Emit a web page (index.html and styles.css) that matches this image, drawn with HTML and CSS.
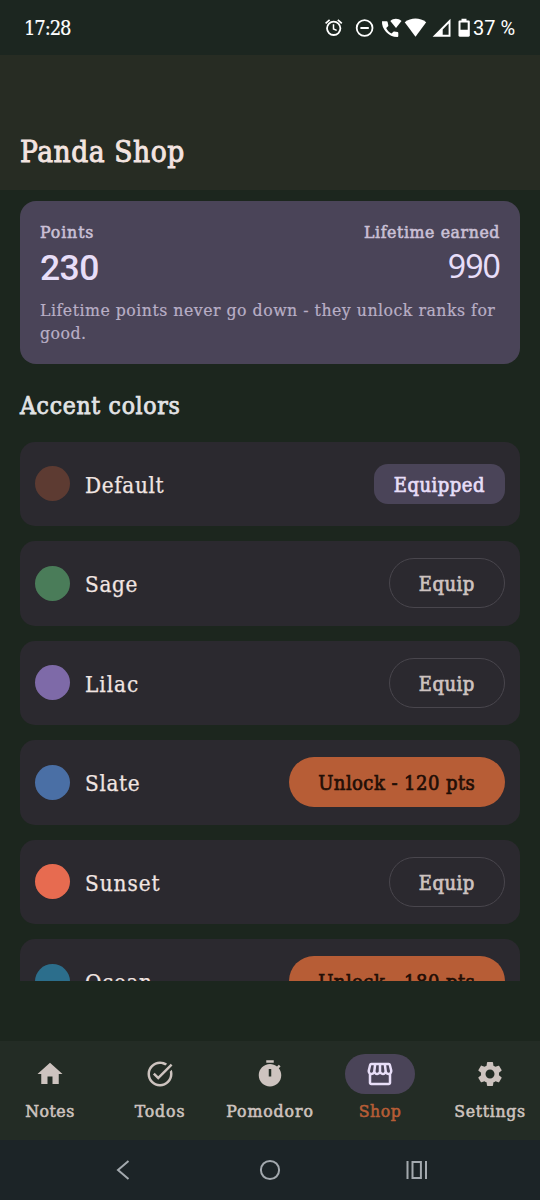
FILE: index.html
```
<!DOCTYPE html>
<html lang="en">
<head>
<meta charset="utf-8">
<title>Panda Shop</title>
<link rel="stylesheet" href="styles.css">
</head>
<body>
<div class="screen">
  <div class="status">
    <span class="clock">17:28</span>
    <div class="status-right">
      <svg width="150" height="24" viewBox="0 0 150 24" fill="none">
        <g stroke="#fff" stroke-width="1.8">
          <circle cx="10.700" cy="12.300" r="6.700"/>
          <path d="M10.500 8.300v4.700l3.200 1.400" stroke-width="1.500"/>
          <path d="M2.600 7.400l4-3.500M18.800 7.400l-4-3.500" stroke-width="1.700"/>
          <circle cx="41.600" cy="12" r="7.900"/>
          <path d="M37.400 12h8.400" stroke-width="2"/>
        </g>
        <g fill="#fff">
          <path d="M59 5.200c-.6 7.600 6.400 15.800 15.400 15.800.6 0 .9-.4.9-1v-3.100c0-.5-.3-.8-.8-.9l-3.200-.6c-.4 0-.7.100-.9.300l-1.900 1.900c-2.500-1.300-4.200-3.100-5.300-5.500l1.900-1.900c.2-.3.300-.5.200-.9l-.7-3.300c-.1-.5-.4-.8-.9-.8z"/>
          <path d="M67.300 5c3-2.900 8.200-2.900 11.200 0L73 12z"/>
          <path d="M81.700 6.300c6.200-5 15.300-5 21.500 0L92.500 20.700z"/>
          <path fill-rule="evenodd" d="M127.500 2.800v17.900h-17.900zM125.600 7.600l-5.900 5.900v5.300h5.900z"/>
          <path fill-rule="evenodd" d="M138.500 2.800h5v1.700h2c.8 0 1.300.5 1.300 1.200V19.600c0 .7-.5 1.200-1.300 1.200h-8.700c-.8 0-1.300-.5-1.300-1.200V5.700c0-.7.5-1.200 1.300-1.200h1.700zM137.500 6.600v7.200h7.200V6.600z"/>
        </g>
      </svg>
      <span class="battery-text">37 %</span>
    </div>
  </div>

  <header class="topbar"><h1 class="title">Panda Shop</h1></header>

  <main class="content">
    <section class="points-card">
      <div class="points-row">
        <div>
          <div class="label label-points">Points</div>
          <div class="points-value">230</div>
        </div>
        <div class="lifetime">
          <div class="label">Lifetime earned</div>
          <div class="lifetime-value">990</div>
        </div>
      </div>
      <p class="hint">Lifetime points never go down - they unlock ranks for good.</p>
    </section>

    <h2 class="section-title">Accent colors</h2>

    <div class="list">
      <div class="item"><span class="dot brown"></span><span class="name">Default</span><span class="badge">Equipped</span></div>
      <div class="item"><span class="dot sage"></span><span class="name">Sage</span><button class="btn outline">Equip</button></div>
      <div class="item"><span class="dot lilac"></span><span class="name wide">Lilac</span><button class="btn outline">Equip</button></div>
      <div class="item"><span class="dot slate"></span><span class="name">Slate</span><button class="btn filled">Unlock - 120 pts</button></div>
      <div class="item"><span class="dot sunset"></span><span class="name wide">Sunset</span><button class="btn outline">Equip</button></div>
      <div class="item"><span class="dot ocean"></span><span class="name">Ocean</span><button class="btn filled">Unlock - 180 pts</button></div>
    </div>
  </main>

  <nav class="tabs">
    <a class="tab"><span class="pill"><svg class="icon" viewBox="0 0 24 24"><path d="M10 20v-6h4v6h5v-8h3L12 3 2 12h3v8z"/></svg></span><span class="tab-label">Notes</span></a>
    <a class="tab"><span class="pill"><svg class="icon" viewBox="0 0 24 24"><path d="M22 5.180L10.590 16.600l-4.240-4.240 1.410-1.410 2.830 2.830 10-10L22 5.180zm-2.210 5.040c.13.57.21 1.170.21 1.780 0 4.420-3.580 8-8 8s-8-3.580-8-8 3.580-8 8-8c1.580 0 3.040.46 4.280 1.250l1.440-1.440C16.100 2.670 14.130 2 12 2 6.480 2 2 6.480 2 12s4.480 10 10 10 10-4.480 10-10c0-1.190-.22-2.330-.6-3.390l-1.610 1.610z"/></svg></span><span class="tab-label spread">Todos</span></a>
    <a class="tab"><span class="pill"><svg class="icon" viewBox="0 0 24 24"><path d="M9 1h6v2H9z"/><path d="M19.030 7.390l1.420-1.420c-.43-.51-.9-.99-1.410-1.410l-1.420 1.420C16.070 4.740 14.120 4 12 4c-4.970 0-9 4.030-9 9s4.020 9 9 9 9-4.030 9-9c0-2.120-.74-4.070-1.970-5.610zM13 14h-2V8h2v6z"/></svg></span><span class="tab-label spread">Pomodoro</span></a>
    <a class="tab active"><span class="pill"><svg class="icon" viewBox="0 0 24 24"><path d="M21.900 8.890l-1.050-4.370c-.22-.9-1-1.520-1.910-1.520H5.050c-.9 0-1.690.63-1.900 1.520L2.100 8.890c-.24 1.020-.02 2.060.62 2.880.08.11.19.19.28.29V19c0 1.100.9 2 2 2h14c1.100 0 2-.9 2-2v-6.940c.09-.09.2-.18.28-.28.64-.82.87-1.870.62-2.890zm-2.990-3.900l1.050 4.370c.1.42.01.84-.25 1.170-.14.18-.44.47-.94.47-.61 0-1.140-.49-1.210-1.140L16.980 5l1.930-.01zM13 5h1.960l.54 4.520c.05.39-.07.78-.33 1.070-.22.26-.54.41-.95.41-.67 0-1.220-.59-1.220-1.310V5zM8.490 9.520L9.040 5H11v4.690c0 .72-.55 1.310-1.290 1.310-.34 0-.65-.15-.89-.41-.25-.29-.37-.68-.33-1.070zm-4.450-.16L5.050 5h1.970l-.58 4.860c-.08.65-.6 1.140-1.210 1.140-.49 0-.8-.29-.93-.47-.27-.32-.36-.75-.26-1.170zM5 19v-6.030c.08.01.15.03.23.03.87 0 1.660-.36 2.240-.95.6.6 1.400.95 2.310.95.87 0 1.650-.36 2.230-.93.59.57 1.390.93 2.290.93.84 0 1.640-.35 2.240-.95.58.59 1.370.95 2.240.95.08 0 .15-.02.23-.03V19H5z"/></svg></span><span class="tab-label">Shop</span></a>
    <a class="tab"><span class="pill"><svg class="icon" viewBox="0 0 24 24"><path d="M19.140 12.940c.04-.3.06-.61.06-.94 0-.32-.02-.64-.07-.94l2.030-1.580c.18-.14.23-.41.12-.61l-1.920-3.320c-.12-.22-.37-.29-.59-.22l-2.390.96c-.5-.38-1.030-.7-1.620-.94l-.36-2.540c-.04-.24-.24-.41-.48-.41h-3.840c-.24 0-.43.17-.47.41l-.36 2.540c-.59.24-1.130.57-1.620.94l-2.390-.96c-.22-.08-.47 0-.59.22L2.740 8.870c-.12.21-.08.47.12.61l2.030 1.580c-.05.3-.09.63-.09.94s.02.64.07.94l-2.030 1.580c-.18.14-.23.41-.12.61l1.920 3.320c.12.22.37.29.59.22l2.390-.96c.5.38 1.030.7 1.620.94l.36 2.540c.05.24.24.41.48.41h3.840c.24 0 .44-.17.47-.41l.36-2.540c.59-.24 1.130-.56 1.620-.94l2.390.96c.22.08.47 0 .59-.22l1.920-3.320c.12-.22.07-.47-.12-.61l-2.010-1.580zM12 15.600c-1.980 0-3.600-1.620-3.600-3.600s1.620-3.600 3.600-3.600 3.600 1.620 3.600 3.600-1.620 3.600-3.600 3.600z"/></svg></span><span class="tab-label spread-sm">Settings</span></a>
  </nav>

  <div class="sysnav">
    <svg class="sys" viewBox="0 0 24 24"><path d="M17.500 3L7 12l10.500 9"/></svg>
    <svg class="sys" viewBox="0 0 24 24"><circle cx="12" cy="12" r="9.100"/></svg>
    <svg class="sys" viewBox="0 0 24 24"><path d="M2.500 3v18M21 3v18M7.500 4h8.400v16H7.500z"/></svg>
  </div>
</div>
</body>
</html>
```
FILE: styles.css
```
* { box-sizing: border-box; }
body {
  margin: 0;
  background: #1c261e;
  font-family: "Roboto Slab", "DejaVu Serif Condensed", "DejaVu Serif", serif;
}
.screen { width: 540px; height: 1200px; display: flex; flex-direction: column; overflow: hidden; }

.status {
  height: 55px; flex: none; padding: 0 24px;
  display: flex; align-items: center; justify-content: space-between;
  background: #1c2620; color: #fff;
}
.clock { font-size: 20px; letter-spacing: -1.1px; -webkit-text-stroke: .2px; }
.status-right { display: flex; align-items: center; }
.battery-text { font: 20px/24px Roboto, sans-serif; width: 43px; white-space: nowrap; }

.topbar { height: 135px; flex: none; display: flex; align-items: flex-end; padding: 0 20px 18px; background: #272c23; }
.title { margin: 0; font-size: 29.5px; line-height: 40px; font-weight: 400; letter-spacing: .6px; color: #f3e4e0; -webkit-text-stroke: .9px; }

.content { height: 791px; flex: none; padding: 10.5px 20px 0; overflow: hidden; }
.points-card { height: 163px; padding: 19.5px 20px 0; border-radius: 16px; background: #4a4458; color: #e8def8; }
.points-row { display: flex; justify-content: space-between; }
.label { font-size: 17.500px; line-height: 25px; letter-spacing: .6px; color: #cac0d6; -webkit-text-stroke: .55px; }
.label-points { letter-spacing: .9px; }
.points-value { padding-top: 2px; font: 500 35.500px/42px Roboto, sans-serif; letter-spacing: -.6px; }
.lifetime { text-align: right; }
.lifetime-value { padding-top: 1px; font: 400 32px/40px "Noto Sans", sans-serif; letter-spacing: -.9px; }
.hint { margin: 10px 0 0; width: 470px; font-size: 17.500px; line-height: 23px; letter-spacing: .5px; color: #b9afc6; -webkit-text-stroke: .2px; }
.section-title { margin: 27.5px 0 20.500px; font-size: 24.500px; line-height: 30px; font-weight: 400; letter-spacing: .7px; color: #e2e3e5; -webkit-text-stroke: .75px; }

.list { display: flex; flex-direction: column; gap: 15px; }
.item { height: 84.500px; flex: none; display: flex; align-items: center; padding: 0 15px; border-radius: 15px; background: #2b292f; }
.dot { width: 35px; height: 35px; border-radius: 50%; }
.brown { background: #5d3b32; }
.sage { background: #4a7c59; }
.lilac { background: #7e6aa8; }
.slate { background: #4a6fa5; }
.sunset { background: #e76b50; }
.ocean { background: #2c6e8c; }
.name { flex: 1; padding: 2px 0 0 15px; font-size: 22.300px; letter-spacing: .65px; color: #f1e5e2; -webkit-text-stroke: .25px; }
.name.wide { letter-spacing: .95px; }
.badge { height: 40px; padding: 1px 20px 0; border-radius: 14px; background: #4a4458; color: #e8def8; font-size: 20px; line-height: 40px; letter-spacing: .5px; -webkit-text-stroke: .65px; }
.btn { height: 50px; padding: 2px 0 0; border: 0; border-radius: 25px; font-family: inherit; font-size: 20px; letter-spacing: .45px; white-space: nowrap; -webkit-text-stroke: .65px; }
.outline { width: 116.500px; border: 1.300px solid #49464d; background: transparent; color: #cec3c1; }
.filled { width: 216.500px; background: #b75d36; color: #210e06; }

.tabs { height: 99px; flex: none; margin-top: 60px; padding-top: 13px; display: grid; grid-template-columns: repeat(5, 1fr); column-gap: 10px; background: #232c25; }
.tab { display: flex; flex-direction: column; align-items: center; gap: 5px; color: #cdc3bf; }
.pill { width: 70px; height: 40px; border-radius: 20px; display: flex; align-items: center; justify-content: center; }
.icon { width: 30px; height: 30px; fill: currentColor; }
.tab-label { font-size: 17.500px; line-height: 24px; letter-spacing: .55px; -webkit-text-stroke: .55px; }
.spread { letter-spacing: .9px; }
.spread-sm { letter-spacing: .7px; }
.active .pill { background: #4a4458; color: #e8def8; }
.active .tab-label { color: #b75d36; }

.sysnav { flex: 1; display: flex; align-items: center; justify-content: center; gap: 123px; background: #1c2427; }
.sys { width: 24px; height: 24px; fill: none; stroke: #a3a9ae; stroke-width: 2; }
```
